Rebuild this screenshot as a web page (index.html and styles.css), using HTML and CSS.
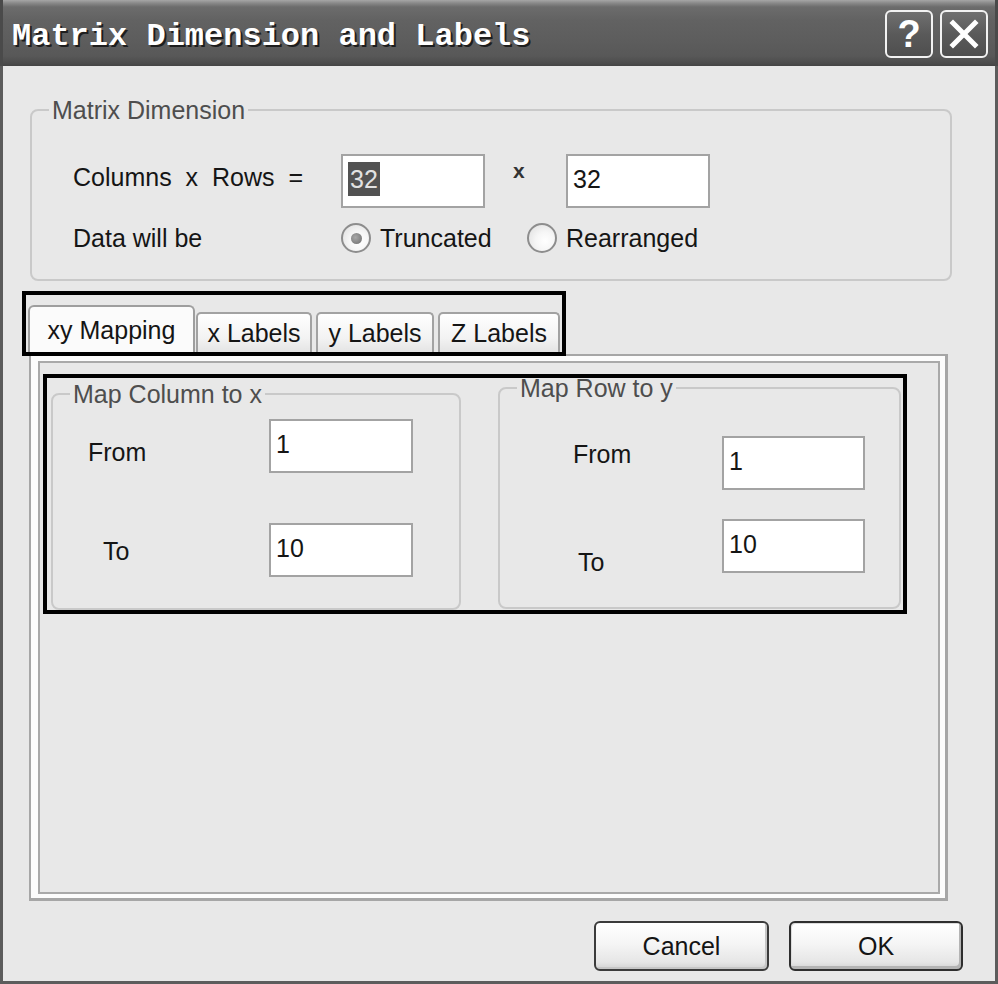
FILE: index.html
```html
<!DOCTYPE html>
<html lang="en">
<head>
<meta charset="utf-8">
<title>Matrix Dimension and Labels</title>
<link rel="stylesheet" href="styles.css">
</head>
<body>
<div class="window">
  <div class="titlebar">
    <div class="title">Matrix Dimension and Labels</div>
    <div class="caption-buttons">
      <div class="cap-btn help">?</div>
      <div class="cap-btn close">
        <svg width="44" height="44" viewBox="0 0 44 44"><path d="M11 11 L33 33 M33 11 L11 33" stroke="#ffffff" stroke-width="5" stroke-linecap="square" fill="none"/></svg>
      </div>
    </div>
  </div>
  <div class="client">
    <fieldset class="group matrix">
      <legend>Matrix Dimension</legend>
      <div class="row row-dims">
        <span class="lbl lbl-dims">Columns x Rows =</span>
        <div class="textbox"><span class="sel">32</span></div>
        <span class="times">x</span>
        <div class="textbox">32</div>
      </div>
      <div class="row row-radio">
        <span class="lbl lbl-data">Data will be</span>
        <span class="opt opt-first"><span class="radio"><span class="dot"></span></span>Truncated</span>
        <span class="opt"><span class="radio"></span>Rearranged</span>
      </div>
    </fieldset>

    <div class="tabs">
      <div class="tab active">xy Mapping</div>
      <div class="tab t1">x Labels</div>
      <div class="tab t2">y Labels</div>
      <div class="tab t3">Z Labels</div>
      <div class="callout"></div>
    </div>

    <div class="panel">
      <div class="panel-inner">
        <div class="mapbox">
          <fieldset class="group map map-col">
            <legend>Map Column to x</legend>
            <div class="frow first">
              <span class="flbl c-from">From</span>
              <div class="textbox">1</div>
            </div>
            <div class="frow second">
              <span class="flbl c-to">To</span>
              <div class="textbox">10</div>
            </div>
          </fieldset>
          <fieldset class="group map map-row">
            <legend>Map Row to y</legend>
            <div class="frow first">
              <span class="flbl r-from">From</span>
              <div class="textbox">1</div>
            </div>
            <div class="frow second">
              <span class="flbl r-to">To</span>
              <div class="textbox">10</div>
            </div>
          </fieldset>
        </div>
      </div>
    </div>

    <div class="buttons">
      <button class="btn">Cancel</button>
      <button class="btn default">OK</button>
    </div>
  </div>
</div>
</body>
</html>
```
FILE: styles.css
```css
* { box-sizing: border-box; }
html, body { margin: 0; padding: 0; }
body {
  width: 998px;
  height: 984px;
  overflow: hidden;
  background: #e8e8e8;
  font-family: "Liberation Sans", Arial, sans-serif;
  font-size: 25px;
  color: #151515;
}
.window { width: 998px; height: 984px; display: flex; flex-direction: column; }

/* title bar */
.titlebar {
  height: 66px;
  flex: none;
  display: flex;
  justify-content: space-between;
  align-items: flex-start;
  background: linear-gradient(to bottom, #a6a6a6 0px, #8a8a8a 3px, #6c6c6c 7px, #626262 20px, #5d5d5d 40px, #585858 56px, #4c4c4c 63px, #444444 66px);
  border-left: 3px solid #4a4a4a;
  border-right: 3px solid #4a4a4a;
}
.title {
  font-family: "Liberation Mono", "Courier New", monospace;
  font-weight: bold;
  font-size: 32px;
  line-height: 36px;
  color: #ffffff;
  padding: 19px 0 0 9px;
  text-shadow: 2px 2px 0 #1e1e1e;
  white-space: nowrap;
}
.caption-buttons { display: flex; gap: 7px; padding: 10px 7px 0 0; }
.cap-btn {
  width: 48px;
  height: 48px;
  border: 2px solid #f2f2f2;
  border-radius: 6px;
  background: linear-gradient(to bottom, #707070, #5a5a5a 50%, #4e4e4e);
  display: flex;
  align-items: center;
  justify-content: center;
  color: #ffffff;
}
.cap-btn.help { font-size: 38px; font-weight: bold; line-height: 44px; }

/* client area */
.client {
  flex: 1;
  border-left: 3px solid #5c5c5c;
  border-right: 3px solid #5c5c5c;
  border-bottom: 3px solid #5c5c5c;
  padding: 31px 0 0 27px;
  background: #e8e8e8;
}

.group {
  margin: 0;
  padding: 0;
  min-width: 0;
  border: 2px solid #c9c9c9;
  border-radius: 8px;
}
.group legend {
  margin-left: 17px;
  padding: 0 3px;
  color: #4e4e4e;
  line-height: 26px;
}

.matrix { width: 922px; padding: 0 0 25px 0; }
.row { display: flex; }
.row-dims { margin-top: 31px; align-items: flex-start; }
.lbl { padding-left: 41px; width: 309px; flex: none; white-space: nowrap; }
.lbl-dims { line-height: 46px; word-spacing: 7px; }
.textbox {
  width: 144px;
  height: 54px;
  flex: none;
  background: #ffffff;
  border: 2px solid #a3a3a3;
  padding: 6px 5px;
  line-height: 34px;
  white-space: nowrap;
}
.sel { display: inline-block; background: #525252; color: #e2e2e2; padding: 0 2px; }
.times {
  width: 81px;
  flex: none;
  padding-left: 28px;
  font-size: 21px;
  line-height: 21px;
  margin-top: 6px;
  font-weight: bold;
  color: #333;
}
.row-radio { margin-top: 14px; height: 32px; align-items: center; }
.lbl-data { line-height: 32px; }
.opt { display: flex; align-items: center; gap: 9px; white-space: nowrap; }
.opt-first { width: 186px; flex: none; }
.radio {
  width: 30px;
  height: 30px;
  border-radius: 50%;
  border: 2px solid #8d8d8d;
  background: radial-gradient(circle at 62% 62%, #ffffff 0, #f6f6f6 40%, #dcdcdc 100%);
  display: flex;
  align-items: center;
  justify-content: center;
  flex: none;
}
.dot {
  width: 11px;
  height: 11px;
  border-radius: 50%;
  background: radial-gradient(circle at 40% 40%, #a8a8a8, #6c6c6c);
}

/* tabs */
.tabs {
  position: relative;
  z-index: 2;
  display: flex;
  align-items: flex-end;
  height: 51px;
  margin: 24px 0 0 -2px;
}
.tab {
  text-align: center;
  line-height: 30px;
  white-space: nowrap;
  border: 2px solid #a2a2a2;
  border-bottom: none;
}
.tab.active {
  width: 167px;
  height: 51px;
  padding-top: 8px;
  border-radius: 6px 6px 0 0;
  border-color: #9e9e9e;
  background: #fbfbfb;
}
.tab.t1, .tab.t2, .tab.t3 {
  height: 42px;
  margin-bottom: 2px;
  padding-top: 4px;
  border-radius: 5px 5px 0 0;
  background: linear-gradient(to bottom, #ffffff, #f3f3f3 60%, #e2e2e2);
}
.tab.t1 { width: 116px; margin-left: 1px; }
.tab.t2 { width: 118px; margin-left: 4px; }
.tab.t3 { width: 122px; margin-left: 4px; }
.callout {
  position: absolute;
  top: -14px;
  left: -6px;
  width: 544px;
  height: 65px;
  border: 4px solid #000000;
  pointer-events: none;
}

/* tab page */
.panel {
  width: 919px;
  height: 547px;
  margin: -2px 0 0 -1px;
  border: 2px solid #a6a6a6;
  border-right-width: 3px;
  border-bottom-width: 3px;
  background: #fcfcfc;
  padding: 5px 5px 4px 7px;
}
.panel-inner {
  height: 100%;
  border: 2px solid #a9a9a9;
  background: #e8e8e8;
  padding: 11px 0 0 3px;
}
.mapbox {
  width: 864px;
  height: 240px;
  border: 4px solid #000000;
  display: flex;
  align-items: flex-start;
}
.map legend { line-height: 20px; color: #4e4e4e; }
.map-col { width: 410px; height: 226px; margin: 6px 0 0 4px; padding-top: 15px; }
.map-row { width: 403px; height: 231px; margin: 0 0 0 37px; padding-top: 38px; }
.frow { display: flex; align-items: flex-start; }
.flbl { line-height: 54px; flex: none; white-space: nowrap; }
.map-col .flbl { width: 216px; }
.map-row .flbl { width: 222px; }
.map-col .second { margin-top: 44px; }
.map-row .second { margin-top: 29px; }
.c-from { padding-left: 35px; margin-top: 6px; }
.c-to { padding-left: 50px; margin-top: 1px; }
.r-from { padding-left: 73px; margin-top: -9px; }
.r-to { padding-left: 78px; margin-top: 16px; }
.map-row .textbox { width: 143px; }

/* dialog buttons */
.buttons {
  width: 933px;
  margin-top: 20px;
  display: flex;
  justify-content: flex-end;
  gap: 20px;
}
.btn {
  width: 175px;
  height: 50px;
  border: 2px solid #3b3b3b;
  border-radius: 6px;
  background: linear-gradient(to bottom, #ffffff, #f5f5f5 45%, #e6e6e6 85%, #d2d2d2);
  box-shadow: inset -2px -2px 0 #c6c6c6;
  font-family: "Liberation Sans", Arial, sans-serif;
  font-size: 25px;
  color: #141414;
  padding: 0;
}
.btn.default { width: 174px; border-color: #2e2e2e; box-shadow: inset -2px -3px 0 #b4b4b4, inset 1px 1px 0 #dcdcdc; }
```
